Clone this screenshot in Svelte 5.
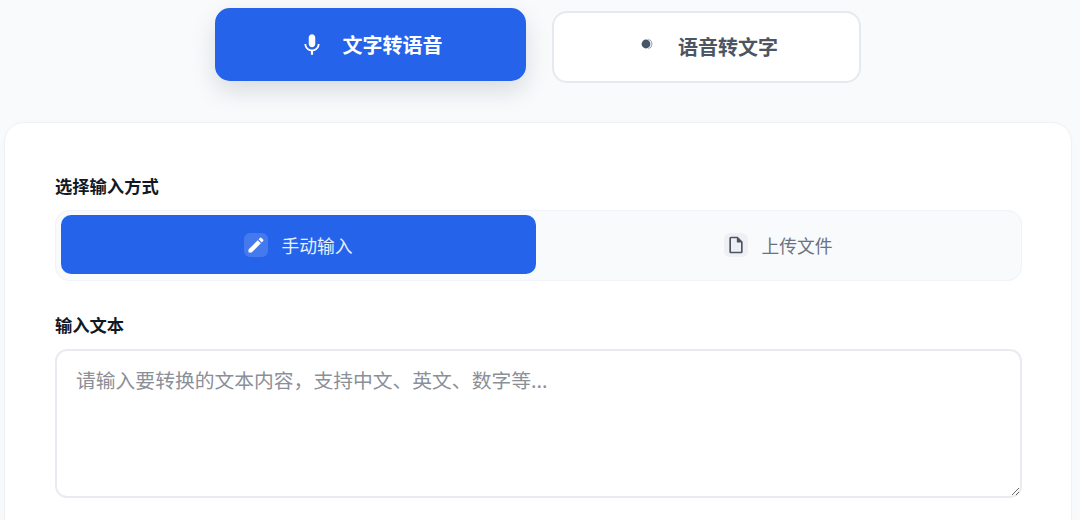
<script>
  const inputModes = [
    { label: '手动输入', active: true, d: 'M3 17.25V21h3.75L17.81 9.94l-3.75-3.75L3 17.25zM20.71 7.04a1 1 0 0 0 0-1.41l-2.34-2.34a1 1 0 0 0-1.41 0l-1.83 1.83 3.75 3.75 1.83-1.83z' },
    { label: '上传文件', active: false, d: 'M14 2H6c-1.1 0-2 .9-2 2v16c0 1.1.9 2 2 2h12c1.1 0 2-.9 2-2V8l-6-6zM6 20V4h7v5h5v11H6z' }
  ];
</script>

<div class="page">
  <nav class="switcher">
    <button class="mode mode-on">
      <svg class="mic" viewBox="0 0 24 24" aria-hidden="true"><path d="M12 14c1.66 0 3-1.34 3-3V5c0-1.66-1.34-3-3-3S9 3.34 9 5v6c0 1.66 1.34 3 3 3zm5.3-3c0 3-2.54 5.1-5.3 5.1S6.7 14 6.7 11H5c0 3.41 2.72 6.23 6 6.72V21h2v-3.28c3.28-.48 6-3.3 6-6.72h-1.7z"/></svg>
      <span>文字转语音</span>
    </button>
    <button class="mode mode-off">
      <svg class="dot" viewBox="0 0 12 12" aria-hidden="true">
        <path class="crescent" d="M7.4 1.2a5 5 0 0 1 0 9.6"/>
        <circle cx="5" cy="6" r="4.4"/>
      </svg>
      <span>语音转文字</span>
    </button>
  </nav>

  <main class="card">
    <div class="label first">选择输入方式</div>
    <div class="tabs">
      {#each inputModes as m}
        <button class="tab" class:active={m.active}>
          <span class="tab-icon"><svg viewBox="0 0 24 24" aria-hidden="true"><path d={m.d}/></svg></span>
          <span>{m.label}</span>
        </button>
      {/each}
    </div>
    <div class="label second">输入文本</div>
    <textarea placeholder="请输入要转换的文本内容，支持中文、英文、数字等..."></textarea>
  </main>
</div>

<style>
  :global(body) {
    margin: 0;
    background: #f8fafc;
  }
  .page {
    height: 520px;
    overflow: hidden;
    box-sizing: border-box;
    padding: 8px 8px 0 4px;
    font-family: "Noto Sans CJK SC", "Noto Sans", sans-serif;
  }
  button {
    font-family: inherit;
    cursor: pointer;
  }
  .switcher {
    display: flex;
    justify-content: center;
    gap: 26px;
    height: 75px;
    align-items: flex-start;
  }
  .mode {
    display: flex;
    align-items: center;
    justify-content: center;
    box-sizing: border-box;
    font-size: 20px;
    font-weight: 700;
    border-radius: 15px;
  }
  .mode-on {
    width: 311px;
    height: 73px;
    gap: 18px;
    padding-top: 1px;
    background: #2563eb;
    color: #fff;
    border: none;
    box-shadow: 0 10px 24px rgba(15, 23, 42, 0.13);
  }
  .mode-off {
    width: 309px;
    height: 72px;
    margin-top: 3px;
    gap: 25px;
    padding: 0 2px 2px 8px;
    background: #fff;
    color: #4b5563;
    border: 2px solid #e6e9ee;
  }
  .mic {
    width: 26px;
    height: 26px;
    fill: #fff;
  }
  .dot {
    width: 12px;
    height: 12px;
    margin-bottom: 5px;
    fill: #475569;
  }
  .crescent {
    fill: none;
    stroke: #94a3b8;
    stroke-width: 1;
  }
  .card {
    margin-top: 39px;
    height: 500px;
    box-sizing: border-box;
    padding: 50px 49px 0 50px;
    background: #fff;
    border: 1px solid #eef2f6;
    border-radius: 20px;
    box-shadow: 0 2px 8px rgba(15, 23, 42, 0.02);
  }
  .label {
    font-size: 17.3px;
    font-weight: 700;
    line-height: 26px;
    color: #111827;
  }
  .tabs {
    display: flex;
    gap: 5px;
    box-sizing: border-box;
    height: 71px;
    margin-top: 11px;
    padding: 4px 5px 6px;
    background: #f8fafc;
    border: 1px solid #f0f3f7;
    border-radius: 14px;
  }
  .tab {
    flex: 1;
    height: 59px;
    display: flex;
    align-items: center;
    justify-content: center;
    gap: 13px;
    border: none;
    border-radius: 10px;
    background: transparent;
    color: #6b7280;
    font-size: 17.8px;
  }
  .tab.active {
    background: #2563eb;
    color: #e8f0fe;
  }
  .tab-icon {
    width: 24px;
    height: 24px;
    display: flex;
    align-items: center;
    justify-content: center;
    border-radius: 6px;
    background: #eef0f3;
  }
  .tab-icon svg {
    width: 20px;
    height: 20px;
    fill: #4b5563;
  }
  .tab.active .tab-icon {
    background: rgba(255, 255, 255, 0.15);
  }
  .tab.active .tab-icon svg {
    fill: #fff;
  }
  .second {
    margin-top: 31px;
  }
  textarea {
    display: block;
    width: 100%;
    height: 149px;
    box-sizing: border-box;
    margin-top: 11px;
    padding: 14px 19px;
    font-family: inherit;
    font-size: 19.8px;
    line-height: 30px;
    color: #1e293b;
    background: #fff;
    border: 2px solid #e8ebef;
    border-radius: 12px;
    outline: none;
  }
  textarea::placeholder {
    color: #8a8f98;
    opacity: 1;
  }
</style>
